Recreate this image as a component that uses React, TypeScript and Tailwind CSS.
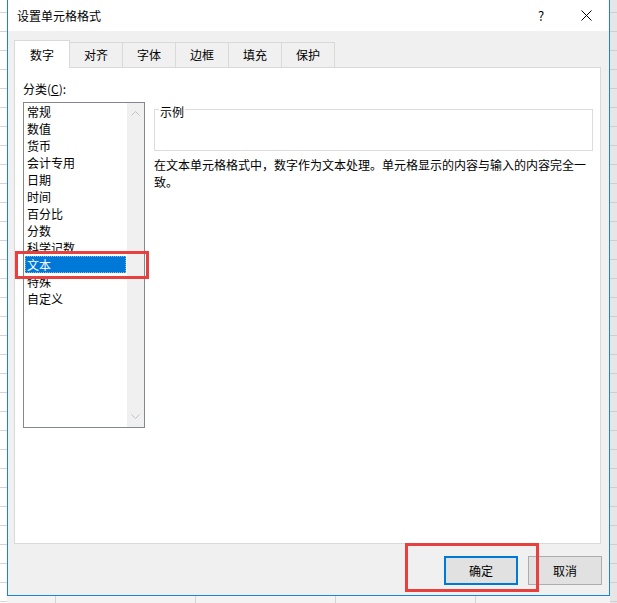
import React from 'react';

const FONT = "font-['Microsoft_YaHei','Noto_Sans_CJK_SC',sans-serif]";

const tabs = ['数字', '对齐', '字体', '边框', '填充', '保护'];
const categories = ['常规', '数值', '货币', '会计专用', '日期', '时间', '百分比', '分数', '科学记数', '文本', '特殊', '自定义'];

const App: React.FC = () => {
  return (
    <div className={`relative flex w-[617px] h-[603px] overflow-hidden text-[12px] text-black ${FONT}`}>
      {/* spreadsheet behind, left strip */}
      <div className="w-[7px] h-full bg-white bg-[repeating-linear-gradient(to_bottom,transparent_0px,transparent_12px,#d4d4d4_12px,#d4d4d4_13px,transparent_13px,transparent_19px)]" />

      <div className="flex flex-col w-[603px]">
        {/* dialog */}
        <div className="flex flex-col h-[596px] border-l border-r border-b border-[#1883d7]">
          {/* title bar */}
          <div className="flex items-center h-[31px] bg-white">
            <span className="pl-[9px] flex-1">设置单元格格式</span>
            <span className="w-[20px] text-center text-[13px] mr-[30px]">?</span>
            <svg className="mr-[17px]" width="11" height="11" viewBox="0 0 11 11">
              <path d="M0.5 0.5 L10.5 10.5 M10.5 0.5 L0.5 10.5" stroke="#000" strokeWidth="1" fill="none" />
            </svg>
          </div>

          {/* body */}
          <div className="flex-1 bg-[#f0f0f0] pl-[6px] pt-[9px]">
            {/* tabs */}
            <div className="flex h-[27px] items-end">
              {tabs.map((t, i) =>
                i === 0 ? (
                  <div
                    key={t}
                    className="relative z-10 w-[56px] h-[28px] -mb-px bg-white border-l border-t border-r border-[#d9d9d9] flex items-center justify-center"
                  >
                    {t}
                  </div>
                ) : (
                  <div
                    key={t}
                    className="w-[53px] h-[25px] border-t border-r border-[#d9d9d9] flex items-center justify-center"
                  >
                    {t}
                  </div>
                )
              )}
            </div>

            {/* panel */}
            <div className="w-[587px] h-[477px] bg-white border border-[#d9d9d9] flex pt-[12px] pl-[8px]">
              <div className="flex flex-col">
                <div className="leading-[17px]">
                  分类(<span className="underline">C</span>):
                </div>
                <div className="mt-[5px] flex w-[122px] h-[326px] border border-[#828790]">
                  <div className="flex-1">
                    {categories.map((c) => (
                      <div
                        key={c}
                        className={`mx-[1px] px-[2px] h-[17px] leading-[17px] ${
                          c === '文本' ? 'bg-[#0078d7] text-white outline-1 outline-dotted outline-offset-[-1px] outline-[#7fb8ea]' : ''
                        }`}
                      >
                        {c}
                      </div>
                    ))}
                  </div>
                  <div className="w-[17px] bg-[#f0f0f0] flex flex-col items-center justify-between py-[8px]">
                    <svg width="9" height="5" viewBox="0 0 9 5">
                      <path d="M0.5 4.5 L4.5 0.5 L8.5 4.5" stroke="#c2c2c2" fill="none" />
                    </svg>
                    <svg width="9" height="5" viewBox="0 0 9 5">
                      <path d="M0.5 0.5 L4.5 4.5 L8.5 0.5" stroke="#c2c2c2" fill="none" />
                    </svg>
                  </div>
                </div>
              </div>

              <div className="ml-[9px] mt-[29px] w-[439px]">
                <div className="relative h-[42px] border border-[#dcdcdc]">
                  <span className="absolute left-[4px] top-[-7px] px-[1px] bg-white leading-[17px]">示例</span>
                </div>
                <p className="mt-[5px] leading-[17px]">
                  在文本单元格格式中，数字作为文本处理。单元格显示的内容与输入的内容完全一致。
                </p>
              </div>
            </div>

            {/* buttons */}
            <div className="flex justify-end pr-[7px] mt-[12px] gap-[10px]">
              <button className="w-[74px] h-[29px] bg-[#e1e1e1] border-2 border-[#0078d7]">确定</button>
              <button className="w-[74px] h-[29px] bg-[#e1e1e1] border border-[#adadad]">取消</button>
            </div>
          </div>
        </div>

        {/* spreadsheet behind, bottom strip */}
        <div className="flex-1 bg-[#f3f3f3] bg-[repeating-linear-gradient(to_right,transparent_0px,transparent_48px,#d4d4d4_48px,#d4d4d4_49px,transparent_49px,transparent_140px)]" />
      </div>

      {/* spreadsheet behind, right strip */}
      <div className="w-[7px] h-full bg-[#e6e6e6] bg-[repeating-linear-gradient(to_bottom,transparent_0px,transparent_12px,#cfcfcf_12px,#cfcfcf_13px,transparent_13px,transparent_19px)]" />

      {/* red annotation boxes */}
      <div className="absolute left-[15px] top-[251px] w-[134px] h-[28px] border-[3px] border-[#e8403f]" />
      <div className="absolute left-[405px] top-[543px] w-[134px] h-[49px] border-[3px] border-[#e8403f]" />
    </div>
  );
};

export default App;
